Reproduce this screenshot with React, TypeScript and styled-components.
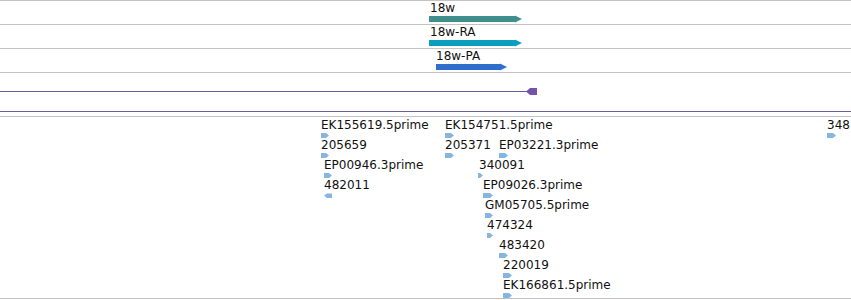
import React from "react";
import styled, { createGlobalStyle } from "styled-components";

const Global = createGlobalStyle`
  html, body { margin: 0; padding: 0; background: #fff; }
  body { font-family: "DejaVu Sans", "Liberation Sans", sans-serif; }
`;

const Viewer = styled.div`
  width: 851px;
  height: 300px;
  display: flex;
  flex-direction: column;
  overflow: hidden;
  background: #fff;
`;

const Track = styled.div<{ $h: number }>`
  position: relative;
  box-sizing: border-box;
  height: ${(p) => p.$h}px;
  border-top: 1px solid #c3c3c3;
  flex: none;
`;

const Feature = styled.div`
  position: absolute;
  display: flex;
  flex-direction: column;
  align-items: flex-start;
`;

const Label = styled.span<{ $pad?: number }>`
  font-family: "DejaVu Sans", "Liberation Sans", sans-serif;
  font-size: 12px;
  line-height: 14px;
  padding-top: ${(p) => p.$pad ?? 0}px;
  color: #111;
  white-space: nowrap;
`;

const BarSvg = styled.svg`
  display: block;
  margin-top: 1px;
  overflow: visible;
`;

const GlyphSvg = styled.svg`
  display: block;
  margin-top: 1px;
`;

const IntronLine = styled.div<{ $top: number; $w: string; $c: string }>`
  position: absolute;
  left: 0;
  top: ${(p) => p.$top}px;
  width: ${(p) => p.$w};
  height: 1px;
  background: ${(p) => p.$c};
`;

const ExonSvg = styled.svg`
  position: absolute;
  display: block;
`;

type Gene = { label: string; labelX: number; barX: number; barEnd: number; color: string };

const genes: Gene[] = [
  { label: "18w", labelX: 430, barX: 429, barEnd: 522, color: "#418f8c" },
  { label: "18w-RA", labelX: 430, barX: 429, barEnd: 522, color: "#0b9fbf" },
  { label: "18w-PA", labelX: 436, barX: 436, barEnd: 507, color: "#2f6ecb" },
];

function Bar({ w, color }: { w: number; color: string }) {
  const h = 6;
  return (
    <BarSvg width={w} height={h}>
      <polygon
        points={`0,0 ${w - 7},0 ${w - 7},-0.5 ${w},${h / 2} ${w - 7},${h + 0.5} ${w - 7},${h} 0,${h}`}
        fill={color}
      />
    </BarSvg>
  );
}

type Est = { label: string; x: number; gx: number; w: number; row: number; rev?: boolean };

const ests: Est[] = [
  { label: "EK155619.5prime", x: 321, gx: 321, w: 8, row: 0 },
  { label: "205659", x: 321, gx: 321, w: 8, row: 1 },
  { label: "EP00946.3prime", x: 324, gx: 324, w: 8, row: 2 },
  { label: "482011", x: 324, gx: 324, w: 8, row: 3, rev: true },
  { label: "EK154751.5prime", x: 445, gx: 445, w: 9, row: 0 },
  { label: "205371", x: 445, gx: 445, w: 9, row: 1 },
  { label: "EP03221.3prime", x: 499, gx: 499, w: 9, row: 1 },
  { label: "340091", x: 479, gx: 478, w: 5, row: 2 },
  { label: "EP09026.3prime", x: 483, gx: 483, w: 10, row: 3 },
  { label: "GM05705.5prime", x: 485, gx: 485, w: 8, row: 4 },
  { label: "474324", x: 487, gx: 487, w: 6, row: 5 },
  { label: "483420", x: 499, gx: 499, w: 9, row: 6 },
  { label: "220019", x: 503, gx: 503, w: 9, row: 7 },
  { label: "EK166861.5prime", x: 503, gx: 503, w: 9, row: 8 },
  { label: "348", x: 827, gx: 827, w: 9, row: 0 },
];

function Glyph({ w, rev, shift }: { w: number; rev?: boolean; shift: number }) {
  const t = Math.min(3, w - 2);
  const pts = rev
    ? `${w},0.5 ${t},0.5 0,2.5 ${t},5 ${w},5`
    : `0,0 ${w - t},0 ${w},2.5 ${w - t},5 0,5`;
  return (
    <GlyphSvg width={w} height={5} style={{ marginLeft: shift }}>
      <polygon points={pts} fill="#86b5de" />
    </GlyphSvg>
  );
}

export default function App() {
  return (
    <>
      <Global />
      <Viewer>
        {genes.map((g) => (
          <Track $h={24} key={g.label}>
            <Feature style={{ left: g.barX, top: 0 }}>
              <Label style={{ marginLeft: g.labelX - g.barX }}>{g.label}</Label>
              <Bar w={g.barEnd - g.barX} color={g.color} />
            </Feature>
          </Track>
        ))}
        <Track $h={44}>
          <IntronLine $top={18} $w="528px" $c="#6e5b9d" />
          <ExonSvg width={11} height={7} style={{ left: 526, top: 15 }}>
            <polygon points="0,3.5 4,0 11,0 11,7 4,7" fill="#7752ad" />
          </ExonSvg>
          <IntronLine $top={38} $w="100%" $c="#6e5b9d" />
        </Track>
        <Track $h={182}>
          {ests.map((e) => (
            <Feature key={e.label} style={{ left: Math.min(e.x, e.gx), top: e.row * 20 }}>
              <Label $pad={1} style={{ marginLeft: e.x - Math.min(e.x, e.gx) }}>{e.label}</Label>
              <Glyph w={e.w} rev={e.rev} shift={e.gx - Math.min(e.x, e.gx)} />
            </Feature>
          ))}
        </Track>
        <Track $h={2} />
      </Viewer>
    </>
  );
}
